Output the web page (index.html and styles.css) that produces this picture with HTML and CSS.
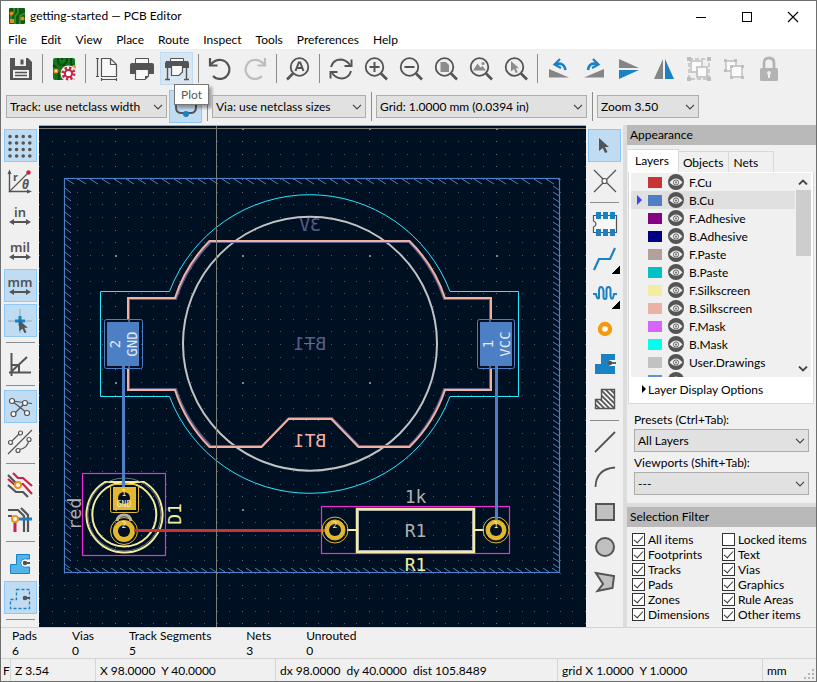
FILE: index.html
```html
<!DOCTYPE html>
<html lang="en">
<head>
  <meta charset="UTF-8" />
  <meta name="viewport" content="width=device-width, initial-scale=1.0"/>
  <title>getting-started — PCB Editor</title>
  <link rel="stylesheet" href="styles.css">
</head>
<body>
  <!-- Shared symbols -->
  <svg class="defs" width="0" height="0" aria-hidden="true">
    <symbol id="eye" viewBox="0 0 16 16">
      <circle cx="8" cy="8" r="8" fill="#545454"/>
      <path d="M1.500 8.500Q8 .5 14.500 8.500Q8 15.500 1.500 8.500Z" fill="#f0f0f0"/>
      <circle cx="8" cy="8.500" r="2.600" fill="#f0f0f0" stroke="#545454" stroke-width=".9"/>
      <circle cx="8" cy="8.500" r=".9" fill="#545454"/>
    </symbol>
    <symbol id="chev" viewBox="0 0 10 6">
      <path d="M1 .8L5 4.800L9 .8" fill="none" stroke="#444" stroke-width="1.200"/>
    </symbol>
    <symbol id="lens" viewBox="0 0 26 26">
      <circle cx="11.500" cy="11" r="8.800" fill="none" stroke="#545454" stroke-width="1.800"/>
      <path d="M18 17.500L24 23.500" stroke="#545454" stroke-width="2.600"/>
    </symbol>
    <symbol id="pointer" viewBox="0 0 10 15">
      <path d="M0 0L10 9H6L8.500 14L6 15L3.800 10L0 13Z"/>
    </symbol>
  </svg>

  <div class="window">
    <header class="titlebar">
      <svg class="logo" width="16" height="16" viewBox="0 0 16 16">
        <rect width="16" height="16" rx="1" fill="#0f5b12"/>
        <path d="M5 0V4L2 7V12M9 0V5L6 8V16M16 5L11 8V16" fill="none" stroke="#3c9a34" stroke-width="1.400"/>
        <circle cx="2.500" cy="5.500" r="2" fill="#e09018"/><circle cx="13.500" cy="10.500" r="2" fill="#e09018"/>
        <rect x="1" y="11" width="4" height="4" fill="#e09018"/>
      </svg>
      <h1>getting-started — PCB Editor</h1>
      <div class="winbuttons">
        <button aria-label="Minimize"><svg width="12" height="12"><path d="M1 6.500H11" stroke="#000"/></svg></button>
        <button aria-label="Maximize"><svg width="12" height="12"><rect x="1.500" y="1.500" width="9" height="9" fill="none" stroke="#000"/></svg></button>
        <button aria-label="Close"><svg width="12" height="12"><path d="M1 1L11 11M11 1L1 11" stroke="#000" stroke-width="1.100"/></svg></button>
      </div>
    </header>

    <nav class="menubar">
      <button>File</button><button>Edit</button><button>View</button><button>Place</button><button>Route</button><button>Inspect</button><button>Tools</button><button>Preferences</button><button>Help</button>
    </nav>

    <!-- Main toolbar -->
    <div class="toolbar">
      <button class="tool" aria-label="Save"><svg viewBox="0 0 26 26"><path d="M2 2H20L24 6V24H2Z" fill="#545454"/><path d="M7 2H18V10H7Z" fill="#f0f0f0"/><path d="M12.500 3.500h3v5h-3z" fill="#545454"/><path d="M5 14H21V22H5Z" fill="#f0f0f0"/><path d="M7 16.500H19M7 19.500H19" stroke="#545454" stroke-width="1.400"/></svg></button>
      <i class="sep"></i>
      <button class="tool" aria-label="Board setup"><svg viewBox="0 0 26 26"><rect x="2" y="2" width="22" height="22" rx="2" fill="#15761a"/><path d="M7 2V5Q7 9 11 9T16 4V2M2 9Q8 12 8 24M11 2V4M20 2V6Q20 10 24 11" fill="none" stroke="#0b4d10" stroke-width="2"/><circle cx="5" cy="15" r="2.500" fill="#f0951c"/><circle cx="5" cy="15" r="1" fill="#fff"/><circle cx="23" cy="11" r="2" fill="#f0951c"/><circle cx="17.500" cy="17.500" r="5.500" fill="none" stroke="#f4f4f4" stroke-width="5"/><circle cx="17.500" cy="17.500" r="5.500" fill="none" stroke="#c8234a" stroke-width="3" stroke-dasharray="2.300 2"/><circle cx="17.500" cy="17.500" r="3.600" fill="#fff" stroke="#c8234a" stroke-width="2"/></svg></button>
      <i class="sep"></i>
      <button class="tool" aria-label="Page settings"><svg viewBox="0 0 26 26"><path d="M7.500 2.500H16.500L22.500 8.500V20.500H7.500ZM16.500 2.500V8.500H22.500" fill="#f8f8f8" stroke="#545454" stroke-width="1.200"/><path d="M3.500 2V21M2 2.500H5M2 20.500H5M7 23.500H23M7.500 22V25M22.500 22V25" stroke="#545454" stroke-width="1.200"/></svg></button>
      <button class="tool" aria-label="Print"><svg viewBox="0 0 26 26"><path d="M6.500 7V2.500H19.500V7" fill="#f8f8f8" stroke="#545454"/><path d="M3 7H23Q25 7 25 9V18H1V9Q1 7 3 7Z" fill="#545454"/><path d="M6.500 13.500H19.500V20L16 23.500H6.500Z" fill="#f8f8f8" stroke="#545454" stroke-width="1.200"/><path d="M19.500 20H16V23.500Z" fill="#545454"/></svg></button>
      <button class="tool hover" aria-label="Plot"><svg viewBox="0 0 26 26"><path d="M6.500 5V2.500H19.500V5" fill="#f8f8f8" stroke="#545454"/><path d="M2 5H24L25 7V12H1V7Z" fill="#545454"/><path d="M7.500 9.500H18.500V16L15 19.500H7.500Z" fill="#f8f8f8" stroke="#545454" stroke-width="1.200"/><path d="M3.500 12V24M22.500 12V24M1 23.500H6M20 23.500H25" stroke="#545454" stroke-width="1.400"/></svg></button>
      <i class="sep"></i>
      <button class="tool" aria-label="Undo"><svg viewBox="0 0 26 26"><path d="M4 8.500Q8 3.500 14 4A9.500 9.500 0 1 1 6 20" fill="none" stroke="#545454" stroke-width="2.200"/><path d="M3 2V9.500H10.500" fill="none" stroke="#545454" stroke-width="2.200"/></svg></button>
      <button class="tool" aria-label="Redo"><svg viewBox="0 0 26 26"><path d="M22 8.500Q18 3.500 12 4A9.500 9.500 0 1 0 20 20" fill="none" stroke="#bdbdbd" stroke-width="2.200"/><path d="M23 2V9.500H15.500" fill="none" stroke="#bdbdbd" stroke-width="2.200"/></svg></button>
      <i class="sep"></i>
      <button class="tool" aria-label="Find"><svg viewBox="0 0 26 26"><circle cx="14.500" cy="11" r="8.800" fill="none" stroke="#545454" stroke-width="1.800"/><path d="M8 17.500L2 23.500" stroke="#545454" stroke-width="2.600"/><path d="M10.500 15L13.800 6.500H15.200L18.500 15M12 12H17" fill="none" stroke="#545454" stroke-width="2"/></svg></button>
      <i class="sep"></i>
      <button class="tool" aria-label="Refresh"><svg viewBox="0 0 26 26"><path d="M3 11Q5 4 12 3.500Q18 3.500 22 9M23 15Q21 22 14 22.500Q8 22.500 4 17" fill="none" stroke="#545454" stroke-width="2"/><path d="M23.500 3.500V10H16.500M2.500 22.500V16H9.500" fill="none" stroke="#545454" stroke-width="2"/></svg></button>
      <button class="tool" aria-label="Zoom in"><svg viewBox="0 0 26 26"><use href="#lens"/><path d="M6.500 11H16.500M11.500 6V16" stroke="#545454" stroke-width="2"/></svg></button>
      <button class="tool" aria-label="Zoom out"><svg viewBox="0 0 26 26"><use href="#lens"/><path d="M6.500 11H16.500" stroke="#545454" stroke-width="2"/></svg></button>
      <button class="tool" aria-label="Zoom to page"><svg viewBox="0 0 26 26"><use href="#lens"/><path d="M7.500 6H13L16 9V16H7.500Z" fill="#8c8c8c"/></svg></button>
      <button class="tool" aria-label="Zoom to objects"><svg viewBox="0 0 26 26"><use href="#lens"/><path d="M5 14.500L9.500 7.500L12.500 11.500L14.500 10L18 14.500Z" fill="#8c8c8c"/><circle cx="15" cy="7.500" r="1.500" fill="#8c8c8c"/></svg></button>
      <button class="tool" aria-label="Zoom to selection"><svg viewBox="0 0 26 26"><use href="#lens"/><use href="#pointer" x="8" y="5" width="8" height="12" fill="#8c8c8c"/></svg></button>
      <i class="sep"></i>
      <button class="tool" aria-label="Rotate left"><svg viewBox="0 0 26 26"><path d="M3 13L23 21.500H3Z" fill="#858585"/><path d="M10 8Q18 6 19.500 14" fill="none" stroke="#1a81c4" stroke-width="2.600"/><path d="M14 3L8.500 8.500L15 12" fill="none" stroke="#1a81c4" stroke-width="2.200"/></svg></button>
      <button class="tool" aria-label="Rotate right"><svg viewBox="0 0 26 26"><path d="M23 13L3 21.500H23Z" fill="#858585"/><path d="M16 8Q8 6 7 14" fill="none" stroke="#1a81c4" stroke-width="2.600"/><path d="M12 3L17.500 8.500L11 12" fill="none" stroke="#1a81c4" stroke-width="2.200"/></svg></button>
      <button class="tool" aria-label="Mirror vertically"><svg viewBox="0 0 26 26"><path d="M3 3L23 12H3Z" fill="#858585"/><path d="M3 14H23L3 23Z" fill="#1a81c4"/></svg></button>
      <button class="tool" aria-label="Mirror horizontally"><svg viewBox="0 0 26 26"><path d="M12 3V23H3Z" fill="#858585"/><path d="M14 3V23H23Z" fill="#1a81c4"/></svg></button>
      <button class="tool" aria-label="Group"><svg viewBox="0 0 26 26"><rect x="3" y="3" width="20" height="20" fill="none" stroke="#bdbdbd" stroke-width="1.400" stroke-dasharray="4 2"/><path d="M5 5H16V16H5Z" fill="#fafafa" stroke="#bdbdbd" stroke-width="1.400"/><path d="M11 11H21V21H11Z" fill="#fafafa" stroke="#bdbdbd" stroke-width="1.600"/><path d="M1 1h4v4H1zM21 1h4v4h-4zM1 21h4v4H1zM21 21h4v4h-4z" fill="#bdbdbd"/></svg></button>
      <button class="tool" aria-label="Ungroup"><svg viewBox="0 0 26 26"><path d="M5 5H15V15H5Z" fill="#fafafa" stroke="#bdbdbd" stroke-width="1.400"/><path d="M10 10H21V21H10Z" fill="#fafafa" stroke="#bdbdbd" stroke-width="1.400"/><path d="M3 3h3v3H3zM13 3h3v3h-3zM3 13h3v3H3zM9 9h3v3H9zM20 9h3v3h-3zM9 20h3v3H9zM20 20h3v3h-3z" fill="#bdbdbd"/></svg></button>
      <button class="tool" aria-label="Lock"><svg viewBox="0 0 26 26"><path d="M8 13V7Q8 2 13 2T18 7V13" fill="none" stroke="#b3b3b3" stroke-width="2.800"/><rect x="4" y="12" width="18" height="13" rx="1.500" fill="#b3b3b3"/><path d="M13 15a2 2 0 0 1 1 3.700V22h-2v-3.300A2 2 0 0 1 13 15Z" fill="#f0f0f0"/></svg></button>
    </div>

    <!-- Track / via / grid / zoom selectors -->
    <div class="toolbar options">
      <span class="combo track"><select aria-label="Track width"><option>Track: use netclass width</option></select><svg><use href="#chev"/></svg></span>
      <span class="tipwrap">
        <button class="tool active" aria-label="Automatic track width"><svg viewBox="0 0 26 26"><path d="M3 8V13Q3 19 8 19H18Q23 19 23 13V8M8 10H18" fill="none" stroke="#545454" stroke-width="2"/><circle cx="13" cy="20" r="3" fill="#1a81c4"/></svg></button>
        <span class="tooltip" role="tooltip">Plot</span>
      </span>
      <i class="sep"></i>
      <span class="combo via"><select aria-label="Via size"><option>Via: use netclass sizes</option></select><svg><use href="#chev"/></svg></span>
      <i class="sep"></i>
      <span class="combo grid"><select aria-label="Grid"><option>Grid: 1.0000 mm (0.0394 in)</option></select><svg><use href="#chev"/></svg></span>
      <i class="sep"></i>
      <span class="combo zoom"><select aria-label="Zoom"><option>Zoom 3.50</option></select><svg><use href="#chev"/></svg></span>
    </div>

    <main class="workspace">
      <div class="sidebar left">
        <button class="tool active" aria-label="Show grid"><svg viewBox="0 0 26 26"><path d="M3 3.500H24M3 10H24M3 16.500H24M3 23H24" stroke="#545454" stroke-width="3.600" stroke-linecap="round" stroke-dasharray="0 6.600"/></svg></button>
        <button class="tool" aria-label="Polar coordinates"><svg viewBox="0 0 26 26"><path d="M2 24L21 5" stroke="#545454" stroke-width="1.100"/><path d="M2.500 4V23.500H22" fill="none" stroke="#545454" stroke-width="1.400"/><path d="M.5 6L2.500 1.500L4.500 6ZM20 21.500L25 23.500L20 25.500Z" fill="#545454"/><circle cx="21.500" cy="4.500" r="2.200" fill="#c8234a"/><text class="ico" x="6" y="13" font-size="11">r</text><text class="ico" x="15" y="21" font-size="12" font-style="italic">θ</text></svg></button>
        <button class="tool unit" aria-label="Inches"><span>in</span><svg class="arrow" viewBox="0 0 22 6"><path d="M0 3L5 0V2H17V0L22 3L17 6V4H5V6Z" fill="#545454"/></svg></button>
        <button class="tool unit" aria-label="Mils"><span>mil</span><svg class="arrow" viewBox="0 0 22 6"><path d="M0 3L5 0V2H17V0L22 3L17 6V4H5V6Z" fill="#545454"/></svg></button>
        <button class="tool unit active" aria-label="Millimeters"><span>mm</span><svg class="arrow" viewBox="0 0 22 6"><path d="M0 3L5 0V2H17V0L22 3L17 6V4H5V6Z" fill="#545454"/></svg></button>
        <button class="tool active" aria-label="Crosshair"><svg viewBox="0 0 26 26"><path d="M1 13H25M13 1V25" stroke="#9aa6ae"/><path d="M8 13H18M13 8V18" stroke="#1a81c4" stroke-width="3"/><use href="#pointer" x="12" y="12" width="9" height="13" fill="#545454"/></svg></button>
        <i class="sep"></i>
        <button class="tool" aria-label="Limit to 45 degrees"><svg viewBox="0 0 26 26"><path d="M4.500 2V25M2 21.500H24M5 20L20 6M4.500 14H12V21" fill="none" stroke="#545454" stroke-width="2"/></svg></button>
        <i class="sep"></i>
        <button class="tool active" aria-label="Ratsnest"><svg viewBox="0 0 26 26"><path d="M5 7L25 9.500M5 7L20 19M18 9L7 20" stroke="#545454" stroke-width="1.200"/><g fill="#fff" stroke="#545454" stroke-width="1.200"><circle cx="5" cy="7" r="2.500"/><circle cx="18" cy="9" r="2.500"/><circle cx="6.500" cy="20" r="2.500"/><circle cx="20" cy="19" r="2.500"/></g></svg></button>
        <button class="tool" aria-label="Curved ratsnest"><svg viewBox="0 0 26 26"><path d="M1 25L25 1M4 13L13 4M11 21Q21 20 22 10" fill="none" stroke="#545454" stroke-width="1.200"/><g fill="#fff" stroke="#545454" stroke-width="1.200"><circle cx="3.500" cy="13.500" r="2"/><circle cx="13.500" cy="4" r="2"/><circle cx="11" cy="21.500" r="2"/><circle cx="22" cy="10.500" r="2"/></g></svg></button>
        <i class="sep"></i>
        <button class="tool" aria-label="Net color mode"><svg viewBox="0 0 26 26"><path d="M1 13L9 20H16L21 25M1 3L10 12" fill="none" stroke="#545454" stroke-width="2.200"/><path d="M1 7L8 13M6 1L11 6H16L25 14M11 12H16L25 22" fill="none" stroke="#c8234a" stroke-width="2.200"/><circle cx="11" cy="13" r="3" fill="#fff" stroke="#f0951c" stroke-width="2"/></svg></button>
        <button class="tool" aria-label="High contrast mode"><svg viewBox="0 0 26 26"><path d="M1 3H11L17 9V25M14 1L21 8V25M1 9H5" fill="none" stroke="#545454" stroke-width="2.200"/><path d="M8 12V25" stroke="#c8234a" stroke-width="3"/><path d="M8 12H25" stroke="#1a81c4" stroke-width="3"/><circle cx="8" cy="12" r="3" fill="#fff" stroke="#f0951c" stroke-width="2"/></svg></button>
        <i class="sep"></i>
        <button class="tool" aria-label="Show filled zones"><svg viewBox="0 0 26 26"><path d="M9.500 4.500H22.500V9H18A3.500 3.500 0 0 0 18 17H22.500V23.500H3.500V14.500H9.500Z" fill="#51b5ea" stroke="#1a81c4"/><circle cx="18" cy="13" r="3.600" fill="#fff"/><circle cx="18" cy="13" r="2.300" fill="#545454"/><path d="M18 13H23" stroke="#545454" stroke-width="2"/></svg></button>
        <button class="tool active" aria-label="Show zone outlines"><svg viewBox="0 0 26 26"><path d="M9.500 4.500H22.500V23.500H3.500V14.500H9.500Z" fill="none" stroke="#1a81c4" stroke-width="1.300" stroke-dasharray="3 2"/><circle cx="18" cy="13" r="2.300" fill="#545454"/><path d="M18 13H23" stroke="#545454" stroke-width="2"/></svg></button>
        <i class="sep"></i>
      </div>

      <!-- Board canvas -->
      <div class="board">
        <svg viewBox="39 126 547 501" preserveAspectRatio="xMidYMid slice">
          <defs>
            <pattern id="dots" x="115" y="128" width="127" height="127" patternUnits="userSpaceOnUse">
              <path d="M0 .5h127M0 13.500h127M0 26.500h127M0 38.500h127M0 51.500h127M0 64.500h127M0 76.500h127M0 89.500h127M0 102.500h127M0 114.500h127" stroke="#4d5a63" stroke-dasharray="1 12 1 12 1 11 1 12 1 12 1 11 1 12 1 12 1 11 1 12"/>
              <path d="M.5 0v127" stroke="#6b747a" stroke-dasharray="1 12 1 12 1 11 1 12 1 12 1 11 1 12 1 12 1 11 1 12"/>
              <rect width="2" height="2" fill="#848484"/>
            </pattern>
            <pattern id="hatchT" x="65" y="179" width="12" height="6" patternUnits="userSpaceOnUse"><path d="M1 0L9 5" stroke="#4d7fc4"/></pattern>
            <pattern id="hatchL" x="65" y="179" width="7" height="8" patternUnits="userSpaceOnUse"><path d="M0 1L6 6" stroke="#4d7fc4"/></pattern>
            <pattern id="hatchR" x="553" y="179" width="6" height="6" patternUnits="userSpaceOnUse"><path d="M0 1L6 5" stroke="#4d7fc4"/></pattern>
            <pattern id="hatchB" x="65" y="568" width="9" height="5" patternUnits="userSpaceOnUse"><path d="M1 0L7 4" stroke="#4d7fc4"/></pattern>
          </defs>
          <rect x="39" y="126" width="547" height="501" fill="#001023"/>
          <rect x="39" y="126" width="547" height="501" fill="url(#dots)"/>

          <!-- ground zone -->
          <rect x="64.500" y="178.500" width="495" height="394" fill="none" stroke="#4d7fc4" stroke-width="1.200"/>
          <rect x="65" y="179" width="494" height="6" fill="url(#hatchT)"/>
          <rect x="65" y="185" width="7" height="383" fill="url(#hatchL)"/>
          <rect x="553" y="185" width="6" height="383" fill="url(#hatchR)"/>
          <rect x="65" y="568" width="494" height="4" fill="url(#hatchB)"/>

          <!-- battery holder BT1 -->
          <path d="M100.500 291.500H169.500A150 150 0 0 1 450 291.500H518.500V396.500H450A150 150 0 0 1 169.500 396.500H100.500Z" fill="none" stroke="#26e9ff"/>
          <circle cx="310" cy="343.700" r="127" fill="none" stroke="#c2c2c2" stroke-width="2"/>
          <path d="M129 299H176A143 143 0 0 1 211 242H409A143 143 0 0 1 444 299H490V389H444A143 143 0 0 1 409 446H359L332 418H289L262 446H211A143 143 0 0 1 176 389H129Z" fill="none" stroke="#595c85" stroke-width="2"/>
          <path d="M128 320V298H175A143 143 0 0 1 209.500 241H409.500A143 143 0 0 1 445 298H491V320M491 368V390H445A143 143 0 0 1 409.500 447H358.500L331.500 419H288.500L261.500 447H209.500A143 143 0 0 1 175 390H128V368" fill="none" stroke="#f2b0a3" stroke-width="2"/>
          <g class="stroke-text" text-anchor="middle">
            <text transform="translate(310 231) scale(-1 1)" fill="#595c85">3V</text>
            <text transform="translate(310 350) scale(-1 1)" fill="#595c85">BT1</text>
            <text transform="translate(310 447) scale(-1 1)" fill="#f2b0a3">BT1</text>
          </g>
          <path d="M304 343.500H315" stroke="#e020e0"/>

          <g fill="#4d7fc4">
            <rect x="107" y="322" width="32" height="44"/>
            <rect x="104.500" y="319.500" width="38" height="49" rx="2" fill="none" stroke="#4d7fc4"/>
            <rect x="480" y="322" width="32" height="44"/>
            <rect x="477.500" y="319.500" width="37" height="49" rx="2" fill="none" stroke="#4d7fc4"/>
          </g>
          <g class="pad-text" text-anchor="middle">
            <text transform="translate(120 344) rotate(-90)">2</text>
            <text transform="translate(137 344) rotate(-90)">GND</text>
            <text transform="translate(493 344) rotate(-90)">1</text>
            <text transform="translate(510 344) rotate(-90)">VCC</text>
          </g>

          <!-- LED D1 -->
          <rect x="82.500" y="473.500" width="83" height="82" fill="none" stroke="#f02ad8" stroke-width="1.200"/>
          <path d="M105 482H144A38 38 0 1 1 105 482Z" fill="none" stroke="#f2eda1" stroke-width="2"/>
          <circle cx="124.300" cy="514.500" r="32" fill="none" stroke="#f2eda1" stroke-width="2"/>
          <circle cx="124.300" cy="514.500" r="36.500" fill="none" stroke="#8d8d84" stroke-width=".8"/>
          <path d="M117 521Q118 515 124 515T131 521" fill="none" stroke="#afafaf" stroke-width="3"/>
          <rect x="113" y="487" width="23" height="23" fill="#e3b72e"/>
          <rect x="110.500" y="484.500" width="28" height="28" rx="2" fill="none" stroke="#e3b72e"/>
          <circle cx="124" cy="498" r="6" fill="#001023"/>
          <circle cx="124" cy="531" r="11" fill="#e3b72e"/>
          <circle cx="124" cy="531" r="13.500" fill="none" stroke="#e3b72e"/>
          <path d="M123.500 366V487" stroke="#4d7fc4" stroke-width="3"/>
          <path d="M134 530.500H326" stroke="#c83434" stroke-width="3"/>
          <circle cx="124" cy="531" r="6" fill="#001023"/>
          <g class="pin-text" text-anchor="middle">
            <text x="124" y="496">1</text><text x="124" y="507">GND</text><text x="124" y="528">2</text>
          </g>
          <g class="stroke-text" text-anchor="middle">
            <text transform="translate(81 514) rotate(-90)" fill="#afafaf">red</text>
            <text transform="translate(181 514) rotate(-90)" fill="#f2eda1">D1</text>
          </g>

          <!-- resistor R1 -->
          <rect x="321.500" y="506.500" width="188" height="47" fill="none" stroke="#f02ad8" stroke-width="1.200"/>
          <rect x="357" y="509" width="117" height="43" fill="none" stroke="#f2eda1" stroke-width="2.500"/>
          <rect x="358.500" y="510.500" width="114" height="40" fill="none" stroke="#afafaf"/>
          <path d="M347 530H357M474 530H484" stroke="#f2eda1" stroke-width="2"/>
          <g fill="#e3b72e" stroke="#e3b72e">
            <circle cx="335" cy="530" r="10"/><circle cx="335" cy="530" r="13" fill="none"/>
            <circle cx="496" cy="530" r="10"/><circle cx="496" cy="530" r="13" fill="none"/>
          </g>
          <path d="M496.500 366V520" stroke="#4d7fc4" stroke-width="3"/>
          <circle cx="335" cy="530" r="6" fill="#001023"/><circle cx="496" cy="530" r="6" fill="#001023"/>
          <g class="pin-text" text-anchor="middle"><text x="335" y="528">2</text><text x="496" y="528">1</text></g>
          <g class="stroke-text" text-anchor="middle">
            <text x="415.500" y="503" fill="#afafaf">1k</text>
            <text x="415.500" y="537" fill="#afafaf">R1</text>
            <text x="415.500" y="571" fill="#f2eda1">R1</text>
          </g>

          <!-- cursor crosshair -->
          <path d="M39 128.500H586M216.500 126V627" stroke="#7d7d78"/>
        </svg>
      </div>

      <div class="sidebar right">
        <button class="tool active" aria-label="Select"><svg viewBox="0 0 26 26"><use href="#pointer" x="7" y="5" width="10" height="15" fill="#545454"/></svg></button>
        <button class="tool" aria-label="Local ratsnest"><svg viewBox="0 0 26 26"><path d="M2 2L24 24M24 2L2 24" stroke="#545454" stroke-width="1.200"/><circle cx="12.500" cy="13" r="2.500" fill="#fff" stroke="#545454" stroke-width="1.200"/></svg></button>
        <i class="sep"></i>
        <button class="tool" aria-label="Add footprint"><svg viewBox="0 0 26 26"><path d="M1.500 4.500H24.500V21.500H1.500V16Q4 15 4 13T1.500 10Z" fill="#f8f8f8" stroke="#545454" stroke-width="1.200"/><path d="M4 1h5v7H4zM11 1h5v7h-5zM18 1h5v7h-5zM4 18h5v7H4zM11 18h5v7h-5zM18 18h5v7h-5z" fill="#1a81c4"/></svg></button>
        <button class="tool more" aria-label="Route track"><svg viewBox="0 0 26 26"><path d="M2 24L7 13H18L23 2" fill="none" stroke="#1a81c4" stroke-width="2.200"/></svg></button>
        <button class="tool more" aria-label="Tune length"><svg viewBox="0 0 26 26"><path d="M1 13H4Q5 19 7 17V10Q7 6 9 6T11.500 10V16Q11.500 18 13 18T14.500 16V9Q14.500 6 16.500 6T18.500 9V15Q19 19 21 17L22 13H25" fill="none" stroke="#1a81c4" stroke-width="2"/></svg></button>
        <button class="tool" aria-label="Add via"><svg viewBox="0 0 26 26"><circle cx="13" cy="13" r="5" fill="#fff" stroke="#f49a0c" stroke-width="4.400"/></svg></button>
        <button class="tool" aria-label="Add zone"><svg viewBox="0 0 26 26"><path d="M9 3H23V23H3V13H9Z" fill="#1a81c4"/><path d="M23 9H18A3.500 3.500 0 0 0 18 15H23Z" fill="#fff"/><circle cx="18" cy="12" r="2.300" fill="#545454"/><path d="M18 12H24" stroke="#545454" stroke-width="1.800"/></svg></button>
        <button class="tool" aria-label="Add rule area"><svg viewBox="0 0 26 26"><clipPath id="area"><path d="M9 3H23V23H3V13H9Z"/></clipPath><path clip-path="url(#area)" d="M-10 0L16 26M-5 0L21 26M0 0L26 26M5 0L31 26M10 0L36 26M15 0L41 26M-15 0L11 26" stroke="#545454" stroke-width="1.700"/><path d="M9.500 3.500H22.500V22.500H3.500V13.500H9.500Z" fill="none" stroke="#545454" stroke-width="1.400"/></svg></button>
        <i class="sep"></i>
        <button class="tool" aria-label="Draw line"><svg viewBox="0 0 26 26"><path d="M3 23L23 3" stroke="#545454" stroke-width="1.800"/></svg></button>
        <button class="tool" aria-label="Draw arc"><svg viewBox="0 0 26 26"><path d="M3.500 23Q4 5 23 3.500" fill="none" stroke="#545454" stroke-width="1.800"/></svg></button>
        <button class="tool" aria-label="Draw rectangle"><svg viewBox="0 0 26 26"><rect x="4" y="5" width="18" height="16" fill="#c0c0c0" stroke="#545454" stroke-width="2"/></svg></button>
        <button class="tool" aria-label="Draw circle"><svg viewBox="0 0 26 26"><circle cx="13" cy="13" r="9" fill="#c0c0c0" stroke="#545454" stroke-width="2"/></svg></button>
        <button class="tool" aria-label="Draw polygon"><svg viewBox="0 0 26 26"><path d="M4 4L22 7L20.500 19L5.500 22L11 15Z" fill="#c0c0c0" stroke="#545454" stroke-width="2"/></svg></button>
      </div>

      <aside class="panels">
        <h2>Appearance</h2>
        <div class="tabs">
          <button class="current">Layers</button><button>Objects</button><button>Nets</button>
        </div>
        <div class="page">
          <div class="layer-box">
            <ul class="layers">
              <li><span class="swatch f-cu"></span><button aria-label="F.Cu visible"><svg><use href="#eye"/></svg></button>F.Cu</li>
              <li class="selected"><span class="swatch b-cu"></span><button aria-label="B.Cu visible"><svg><use href="#eye"/></svg></button>B.Cu</li>
              <li><span class="swatch f-adhesive"></span><button aria-label="F.Adhesive visible"><svg><use href="#eye"/></svg></button>F.Adhesive</li>
              <li><span class="swatch b-adhesive"></span><button aria-label="B.Adhesive visible"><svg><use href="#eye"/></svg></button>B.Adhesive</li>
              <li><span class="swatch f-paste"></span><button aria-label="F.Paste visible"><svg><use href="#eye"/></svg></button>F.Paste</li>
              <li><span class="swatch b-paste"></span><button aria-label="B.Paste visible"><svg><use href="#eye"/></svg></button>B.Paste</li>
              <li><span class="swatch f-silk"></span><button aria-label="F.Silkscreen visible"><svg><use href="#eye"/></svg></button>F.Silkscreen</li>
              <li><span class="swatch b-silk"></span><button aria-label="B.Silkscreen visible"><svg><use href="#eye"/></svg></button>B.Silkscreen</li>
              <li><span class="swatch f-mask"></span><button aria-label="F.Mask visible"><svg><use href="#eye"/></svg></button>F.Mask</li>
              <li><span class="swatch b-mask"></span><button aria-label="B.Mask visible"><svg><use href="#eye"/></svg></button>B.Mask</li>
              <li><span class="swatch drawings"></span><button aria-label="User.Drawings visible"><svg><use href="#eye"/></svg></button>User.Drawings</li>
              <li><span class="swatch comments"></span><button aria-label="User.Comments visible"><svg><use href="#eye"/></svg></button>User.Comments</li>
            </ul>
            <div class="scrollbar">
              <svg width="10" height="6"><path d="M1 5.500L5 1.500L9 5.500" fill="none" stroke="#444" stroke-width="1.800"/></svg>
              <span class="thumb"></span>
              <svg width="10" height="6"><path d="M1 .5L5 4.500L9 .5" fill="none" stroke="#444" stroke-width="1.800"/></svg>
            </div>
          </div>
          <button class="expander">Layer Display Options</button>
        </div>

        <div class="presets">
          <label for="preset">Presets (Ctrl+Tab):</label>
          <span class="combo"><select id="preset"><option>All Layers</option></select><svg><use href="#chev"/></svg></span>
          <label for="viewport">Viewports (Shift+Tab):</label>
          <span class="combo"><select id="viewport"><option>---</option></select><svg><use href="#chev"/></svg></span>
        </div>

        <h2 class="filter-title">Selection Filter</h2>
        <div class="filters">
          <label><input type="checkbox" checked>All items</label>
          <label><input type="checkbox">Locked items</label>
          <label><input type="checkbox" checked>Footprints</label>
          <label><input type="checkbox" checked>Text</label>
          <label><input type="checkbox" checked>Tracks</label>
          <label><input type="checkbox" checked>Vias</label>
          <label><input type="checkbox" checked>Pads</label>
          <label><input type="checkbox" checked>Graphics</label>
          <label><input type="checkbox" checked>Zones</label>
          <label><input type="checkbox" checked>Rule Areas</label>
          <label><input type="checkbox" checked>Dimensions</label>
          <label><input type="checkbox" checked>Other items</label>
        </div>
      </aside>
    </main>

    <!-- Message panel -->
    <dl class="messages">
      <div><dt>Pads</dt><dd>6</dd></div>
      <div><dt>Vias</dt><dd>0</dd></div>
      <div><dt>Track Segments</dt><dd>5</dd></div>
      <div><dt>Nets</dt><dd>3</dd></div>
      <div><dt>Unrouted</dt><dd>0</dd></div>
    </dl>

    <footer class="statusbar">
      <span class="s-file">F</span>
      <span class="s-zoom">Z 3.54</span>
      <span class="s-pos">X 98.0000&nbsp; Y 40.0000</span>
      <span class="s-delta">dx 98.0000&nbsp; dy 40.0000&nbsp; dist 105.8489</span>
      <span class="s-grid">grid X 1.0000&nbsp; Y 1.0000</span>
      <span class="s-unit">mm</span>
      <svg class="grip" width="10" height="10"><path d="M8 0h2v2H8zM4 4h2v2H4zM8 4h2v2H8zM0 8h2v2H0zM4 8h2v2H4zM8 8h2v2H8z" fill="#b5b5b5"/></svg>
    </footer>
  </div>
</body>
</html>
```
FILE: styles.css
```css
:root {
  --face: #f0f0f0;
  --line: #d4d4d4;
  --active: #c0dcf3;
  --active-line: #90c8f6;
  --caption: #b9b9b9;
  --icon: #545454;
}

* {
  margin: 0;
  padding: 0;
  box-sizing: border-box;
}

body {
  font-family: Lato, "Noto Sans", sans-serif;
  font-size: 12px;
  line-height: 15px;
  color: #000;
}

button,
select,
input {
  font: inherit;
  color: inherit;
}

button {
  border: none;
  background: none;
}

.defs {
  position: absolute;
}

.window {
  display: flex;
  flex-direction: column;
  min-height: 100vh;
  border: 1px solid #6e6e6e;
  background: var(--face);
}

.titlebar {
  display: flex;
  align-items: center;
  height: 29px;
  padding-left: 8px;
  background: #fff;
}

.titlebar h1 {
  flex: 1;
  margin-left: 5px;
  font-size: 12px;
  font-weight: normal;
}

.winbuttons {
  display: flex;
}

.winbuttons button {
  width: 46px;
  height: 29px;
}

.winbuttons svg {
  vertical-align: middle;
}

.menubar {
  display: flex;
  gap: 14px;
  height: 19px;
  padding-left: 7px;
  background: #fff;
}

.toolbar {
  display: flex;
  align-items: center;
  gap: 2px;
  height: 39px;
  padding-left: 3px;
}

.toolbar.options {
  height: 37px;
  padding-left: 5px;
}

.tool {
  display: flex;
  align-items: center;
  justify-content: center;
  flex: none;
  width: 33px;
  height: 33px;
  border: 1px solid transparent;
}

.tool svg {
  width: 26px;
  height: 26px;
}

.tool.hover {
  background: #d8e6f2;
  border-color: #c0dcf3;
}

.tool.active {
  background: var(--active);
  border-color: var(--active-line);
}

.toolbar .sep {
  width: 6px;
  height: 29px;
  background: linear-gradient(#8c8c8c, #8c8c8c) center / 1px 100% no-repeat;
}

.combo {
  position: relative;
  display: flex;
}

.combo select {
  width: 100%;
  height: 23px;
  padding: 0 20px 0 3px;
  border: 1px solid #adadad;
  border-radius: 0;
  background: #e1e1e1;
  appearance: none;
}

.combo svg {
  position: absolute;
  top: 9px;
  right: 4px;
  width: 10px;
  height: 6px;
  pointer-events: none;
}

.track { width: 161px; }
.via { width: 154px; }
.grid { width: 211px; }
.zoom { width: 102px; }

.tipwrap {
  position: relative;
}

.tooltip {
  position: absolute;
  top: -6px;
  left: 5px;
  padding: 2px 6px;
  border: 1px solid #767676;
  background: #fff;
  color: #575757;
  box-shadow: 3px 3px 3px rgba(0, 0, 0, 0.35);
}

.workspace {
  display: flex;
  flex: 1;
}

.sidebar {
  display: flex;
  flex-direction: column;
  align-items: center;
  gap: 2px;
  width: 37px;
  padding-top: 4px;
}

.sidebar.left {
  width: 38px;
}

.sidebar .sep {
  width: 29px;
  height: 6px;
  background: linear-gradient(#8c8c8c, #8c8c8c) center / 100% 1px no-repeat;
}

.tool.unit {
  flex-direction: column;
  color: var(--icon);
  font-family: "Noto Sans", sans-serif;
  font-size: 13px;
  font-weight: 600;
  line-height: 13px;
}

.tool .arrow {
  width: 22px;
  height: 6px;
}

.ico {
  font-family: "Noto Sans", sans-serif;
  font-weight: bold;
  fill: var(--icon);
}

.tool.more {
  background: linear-gradient(135deg, transparent 50%, #000 50%) right bottom / 8px 8px no-repeat;
}

.board {
  flex: 1;
  min-width: 0;
  position: relative;
  border-top: 1px solid #a9aaa0;
  background: #001023;
}

/* fills the pane whatever its size */
.board svg {
  position: absolute;
  width: 100%;
  height: 100%;
}

.stroke-text {
  font-family: "DejaVu Sans Mono", monospace;
  font-size: 18px;
}

.pad-text {
  font-family: "DejaVu Sans Mono", monospace;
  font-size: 14px;
  fill: #e4ecf6;
}

.pin-text {
  font-family: "DejaVu Sans Mono", monospace;
  font-size: 8px;
  fill: #f0ead0;
}

.panels {
  width: 193px;
  border-left: 4px solid #dcdcdc;
}

.panels h2 {
  height: 20px;
  padding-left: 3px;
  background: var(--caption);
  font-size: 12px;
  font-weight: normal;
  line-height: 20px;
}

.tabs {
  display: flex;
  align-items: flex-end;
  height: 27px;
  padding-left: 1px;
}

.tabs button {
  height: 21px;
  padding: 0 4px;
  border: 1px solid #d9d9d9;
  border-left: none;
  border-bottom: none;
}

.tabs button:last-child {
  padding: 0 15px 0 5px;
}

.tabs .current {
  height: 23px;
  padding: 0 9px 2px 7px;
  background: #fff;
}

.page {
  margin: 0 2px 0 1px;
  padding: 1px 2px 2px;
  border: 1px solid #d9d9d9;
  border-top: none;
  background: #fff;
}

.layer-box {
  display: flex;
  height: 204px;
  background: var(--face);
  overflow: hidden;
}

.layers {
  flex: 1;
  list-style: none;
}

.layers li {
  display: flex;
  align-items: center;
  height: 18px;
  padding-left: 17px;
}

.layers .selected {
  position: relative;
  background: #e0e0e0;
}

.layers .selected::before {
  content: "";
  position: absolute;
  left: 6px;
  border: 5px solid transparent;
  border-left-color: #4040ff;
  border-right: none;
}

.layers button,
.layers svg {
  display: block;
  width: 16px;
  height: 16px;
}

.layers button {
  margin: 0 5px 0 6px;
}

.swatch {
  width: 14px;
  height: 11px;
}

.f-cu { background: #c83434; }
.b-cu { background: #4d7fc4; }
.f-adhesive { background: #840084; }
.b-adhesive { background: #000084; }
.f-paste { background: #b4a09a; }
.b-paste { background: #00c2c2; }
.f-silk { background: #f2eda1; }
.b-silk { background: #e8b2a7; }
.f-mask { background: #d864ff; }
.b-mask { background: #02ffee; }
.drawings { background: #c2c2c2; }
.comments { background: #5994dc; }

.scrollbar {
  display: flex;
  flex-direction: column;
  align-items: center;
  width: 16px;
  padding: 6px 0 5px;
}

.scrollbar .thumb {
  width: 15px;
  height: 66px;
  margin: 5px 0 auto;
  background: #cdcdcd;
}

.expander {
  display: flex;
  align-items: center;
  height: 24px;
  padding-left: 11px;
}

.expander::before {
  content: "";
  margin-right: 2px;
  border: 4px solid transparent;
  border-left: 4px solid #000;
  border-right: none;
}

.presets {
  padding: 8px 7px 5px;
}

.presets label {
  display: block;
  height: 15px;
  margin-bottom: 2px;
}

.presets .combo {
  margin-bottom: 3px;
}

.panels .filter-title {
  height: 24px;
  border-top: 4px solid #dcdcdc;
}

.filters {
  display: grid;
  grid-template-columns: 90px 1fr;
  padding: 5px 0 4px 5px;
}

.filters label {
  display: flex;
  align-items: center;
  gap: 3px;
  height: 15px;
  white-space: nowrap;
}

.filters input {
  position: relative;
  width: 13px;
  height: 13px;
  border: 1px solid #333;
  background: #fff;
  appearance: none;
}

.filters input:checked::after {
  content: "";
  position: absolute;
  left: 3px;
  top: 0;
  width: 4px;
  height: 8px;
  border: solid #333;
  border-width: 0 1px 1px 0;
  transform: rotate(42deg);
}

.messages {
  display: flex;
  height: 31px;
  padding-left: 11px;
  border-top: 1px solid var(--line);
}

.messages div {
  margin-right: 35px;
}

.statusbar {
  position: relative;
  display: flex;
  height: 23px;
  border-top: 1px solid var(--line);
  line-height: 23px;
}

.statusbar span {
  padding-left: 4px;
  border-right: 1px solid var(--line);
  white-space: nowrap;
}

.statusbar .s-file { width: 10px; padding-left: 2px; }
.s-zoom { width: 85px; }
.s-pos { width: 180px; }
.s-delta { flex: 1; }
.s-grid { width: 205px; }
.statusbar .s-unit { width: 53px; border: none; }

.grip {
  position: absolute;
  right: 2px;
  bottom: 2px;
}
```
